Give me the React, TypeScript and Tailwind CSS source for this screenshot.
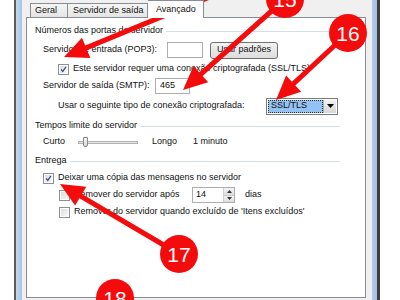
import React from "react";

// arrow polygon: shaft from (x1,y1) to a head whose tip is (x2,y2)
function arrowPoints(x1: number, y1: number, x2: number, y2: number, head = 24, hw = 11, sw = 2.5) {
  const dx = x2 - x1;
  const dy = y2 - y1;
  const len = Math.hypot(dx, dy);
  const ux = dx / len;
  const uy = dy / len;
  const px = -uy;
  const py = ux;
  const bx = x2 - ux * head;
  const by = y2 - uy * head;
  const pts = [
    [x1 + px * sw, y1 + py * sw],
    [bx + px * sw, by + py * sw],
    [bx + px * hw, by + py * hw],
    [x2, y2],
    [bx - px * hw, by - py * hw],
    [bx - px * sw, by - py * sw],
    [x1 - px * sw, y1 - py * sw],
  ];
  return pts.map((p) => p.map((n) => n.toFixed(1)).join(",")).join(" ");
}

function Check({ checked }: { checked?: boolean }) {
  return (
    <span className="w-[11px] h-[11px] border border-[#8e8f8f] bg-white p-px shrink-0">
      <span className="w-full h-full flex items-center justify-center bg-gradient-to-br from-[#dcdcdc] to-[#f8f8f8]">
        {checked && (
          <svg width="9" height="9" viewBox="0 0 9 9">
            <path d="M1.5 4.5 L3.6 7 L7.6 1.2" stroke="#3a4f88" strokeWidth="1.6" fill="none" />
          </svg>
        )}
      </span>
    </span>
  );
}

function Group({ title, className }: { title: string; className: string }) {
  return (
    <div className={`flex items-center h-[14px] pl-[8px] pr-[25px] ${className}`}>
      <span>{title}</span>
      <span className="flex-1 h-px bg-[#d5dfe5] ml-[3px]" />
    </div>
  );
}

function Badge({ n, className }: { n: string; className: string }) {
  return (
    <div className={`absolute w-[38px] h-[38px] rounded-full bg-[#f40c0c] flex items-center justify-center text-white text-[21px] leading-none font-['Liberation_Sans',sans-serif] ${className}`}>
      {n}
    </div>
  );
}

export default function App() {
  return (
    <div className="relative w-[400px] h-[300px] bg-white flex overflow-hidden font-['Liberation_Sans',Arial,sans-serif] text-[9px] text-[#111]">
      <div className="w-[14px] shrink-0" />
      <div className="w-[2px] shrink-0 bg-[#5c5c5c]" />
      <div className="w-[6px] shrink-0 bg-gradient-to-r from-[#c3d8ee] to-[#a9c5e4]" />

      {/* dialog */}
      <div className="w-[350px] shrink-0 bg-[#f0f0f0] flex flex-col pl-[4px] pr-[6px]">
        {/* tabs */}
        <div className="h-[17px] flex items-end pl-[4px] relative z-10">
          <div className="h-[14px] w-[38px] border border-b-0 border-[#898c95] bg-gradient-to-b from-[#f5f5f5] to-[#e4e4e4] pl-[4px] flex items-center">Geral</div>
          <div className="h-[14px] w-[80px] border border-b-0 border-l-0 border-[#898c95] bg-gradient-to-b from-[#f5f5f5] to-[#e4e4e4] pl-[5px] flex items-center">Servidor de saída</div>
          <div className="h-[18px] w-[56px] -mb-px border border-b-0 border-l-0 border-[#898c95] bg-white pl-[8px] flex items-center">Avançado</div>
        </div>

        {/* panel */}
        <div className="w-[340px] flex-1 border border-[#898c95] bg-white flex flex-col">
          <Group title="Números das portas do servidor" className="mt-[6px]" />

          <div className="flex items-center h-[16px] mt-[4px] pl-[16px]">
            <span className="w-[124px]">Servidor de entrada (POP3):</span>
            <span className="w-[36px] h-[16px] border border-[#abadb3] bg-white" />
            <span className="ml-[7px] w-[68px] h-[17px] rounded-[3px] border border-[#707070] bg-gradient-to-b from-[#f3f3f3] to-[#dcdcdc] flex items-center justify-center">Usar padrões</span>
          </div>

          <div className="flex items-center h-[16px] mt-[3px] pl-[31px] gap-[4px]">
            <Check checked />
            <span>Este servidor requer uma conexão criptografada (SSL/TLS)</span>
          </div>

          <div className="flex items-center h-[16px] mt-[1px] pl-[16px]">
            <span className="w-[112px]">Servidor de saída (SMTP):</span>
            <span className="w-[35px] h-[16px] border border-[#abadb3] bg-white pl-[4px] flex items-center">465</span>
          </div>

          <div className="flex items-center h-[18px] mt-[3px] pl-[31px]">
            <span className="w-[208px]">Usar o seguinte tipo de conexão criptografada:</span>
            <span className="w-[72px] h-[17px] border border-[#7a7a7a] bg-white flex items-stretch p-px">
              <span className="flex-1 bg-[#94c2f2] border border-dotted border-[#333] flex items-center pl-[2px]">SSL/TLS</span>
              <span className="w-[13px] bg-gradient-to-b from-[#f2f2f2] to-[#d6d6d6] border-l border-[#acacac] flex items-center justify-center">
                <svg width="7" height="4" viewBox="0 0 7 4"><path d="M0 0 H7 L3.5 4 Z" fill="#000" /></svg>
              </span>
            </span>
          </div>

          <Group title="Tempos limite do servidor" className="mt-[4px]" />

          <div className="flex items-center h-[14px] mt-[2px] pl-[16px]">
            <span className="w-[35px]">Curto</span>
            <span className="relative w-[60px] h-[10px] flex items-center">
              <span className="w-full h-[3px] border border-[#b0b0b0] bg-[#e8e8e8]" />
              <span className="absolute left-[5px] top-0 w-[5px] h-[10px] border border-[#8a8a8a] bg-gradient-to-b from-[#f4f4f4] to-[#d8d8d8] rounded-b-[2px]" />
            </span>
            <span className="ml-[14px] w-[41px]">Longo</span>
            <span>1 minuto</span>
          </div>

          <Group title="Entrega" className="mt-[5px]" />

          <div className="flex items-center h-[16px] mt-[2px] pl-[16px] gap-[4px]">
            <Check checked />
            <span>Deixar uma cópia das mensagens no servidor</span>
          </div>

          <div className="flex items-center h-[16px] mt-[1px] pl-[32px] gap-[4px]">
            <Check />
            <span className="w-[114px]">Remover do servidor após</span>
            <span className="w-[43px] h-[16px] border border-[#abadb3] bg-white flex">
              <span className="flex-1 pl-[3px] flex items-center">14</span>
              <span className="w-[11px] flex flex-col border-l border-[#d0d0d0]">
                <span className="flex-1 bg-gradient-to-b from-[#f4f4f4] to-[#dedede] border-b border-[#c8c8c8] flex items-center justify-center">
                  <svg width="5" height="3" viewBox="0 0 5 3"><path d="M0 3 H5 L2.5 0 Z" fill="#333" /></svg>
                </span>
                <span className="flex-1 bg-gradient-to-b from-[#f4f4f4] to-[#dedede] flex items-center justify-center">
                  <svg width="5" height="3" viewBox="0 0 5 3"><path d="M0 0 H5 L2.5 3 Z" fill="#333" /></svg>
                </span>
              </span>
            </span>
            <span className="ml-[6px]">dias</span>
          </div>

          <div className="flex items-center h-[16px] mt-[1px] pl-[32px] gap-[4px]">
            <Check />
            <span>Remover do servidor quando excluído de 'Itens excluídos'</span>
          </div>
        </div>
        <div className="h-[2px] shrink-0" />
      </div>

      <div className="w-[5px] shrink-0 bg-gradient-to-r from-[#b4cde9] to-[#a3c0e2]" />
      <div className="w-[3px] shrink-0 bg-[#3e3e3e]" />
      <div className="flex-1" />

      {/* annotations */}
      <svg className="absolute inset-0 pointer-events-none" width="400" height="300">
        <polygon points={arrowPoints(212, -4, 64, 57)} fill="#f40c0c" />
        <polygon points={arrowPoints(285, -1, 183, 90)} fill="#f40c0c" />
        <polygon points={arrowPoints(348, 33, 276, 100)} fill="#f40c0c" />
        <polygon points={arrowPoints(179, 254, 60, 184)} fill="#f40c0c" />
      </svg>
      <Badge n="14" className="left-[150px] top-[-32px]" />
      <Badge n="15" className="left-[266px] top-[-20px]" />
      <Badge n="16" className="left-[329px] top-[14px]" />
      <Badge n="17" className="left-[160px] top-[235px]" />
      <Badge n="18" className="left-[96px] top-[279px]" />
    </div>
  );
}
